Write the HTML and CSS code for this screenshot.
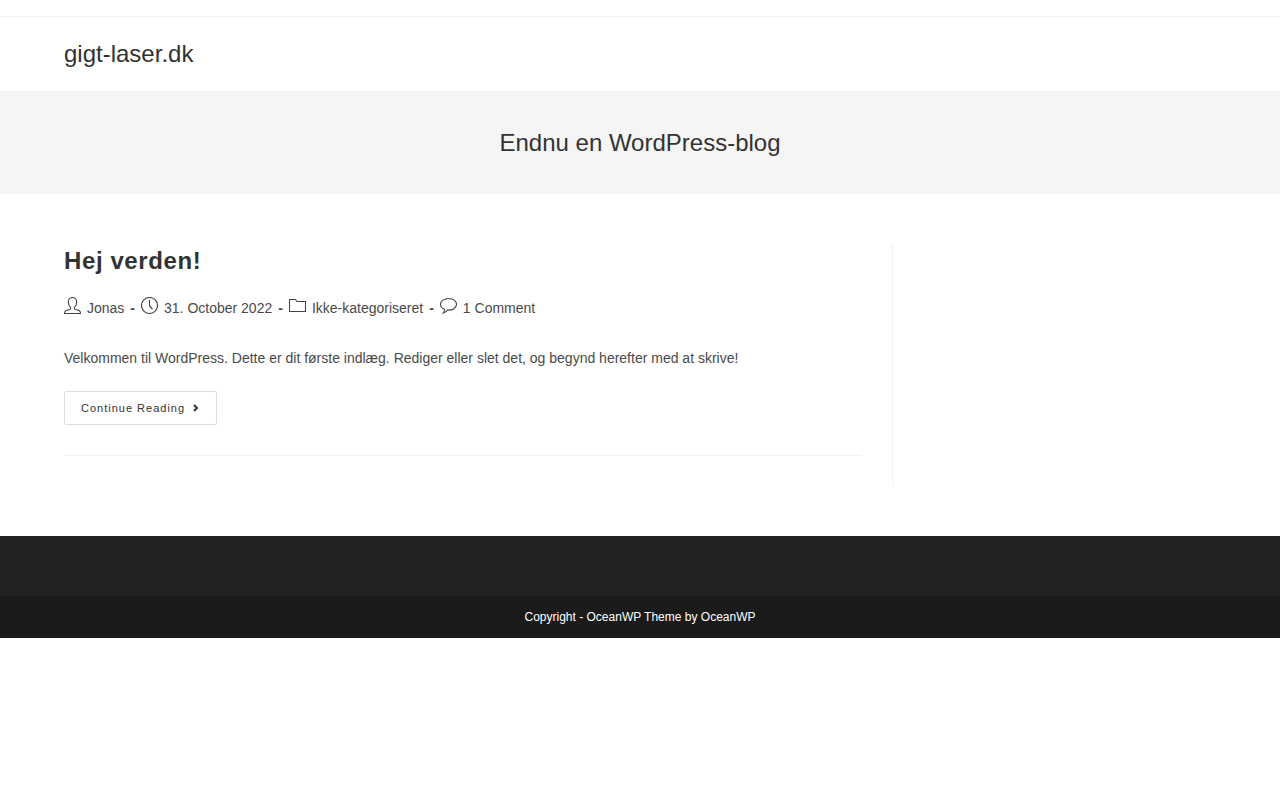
FILE: index.html
```html
<!DOCTYPE html>
<html lang="da">
<head>
<meta charset="utf-8">
<meta name="viewport" content="width=device-width, initial-scale=1">
<title>gigt-laser.dk</title>
<link rel="stylesheet" href="styles.css">
</head>
<body>
<div class="top-bar"></div>
<header class="site-header">
  <div class="container"><a class="site-title" href="#">gigt-laser.dk</a></div>
</header>
<section class="page-header">
  <h1 class="page-title">Endnu en WordPress-blog</h1>
</section>
<main class="container content-wrap">
  <div class="primary">
    <article class="entry">
      <h2 class="entry-title"><a href="#">Hej verden!</a></h2>
      <ul class="meta">
        <li><svg class="icon" viewBox="0 0 17 17" aria-hidden="true"><path d="M6.5 10.3V11.5C6.5 12.3 5.8 12.6 4.8 12.8L2 13.5C1 13.9.5 14.7.5 16.5H16.5C16.5 14.7 16 13.9 15 13.5L12.2 12.8C11.2 12.6 10.5 12.3 10.5 11.5V10.3C11.8 9.3 12.7 7.6 12.7 5.2C12.7 2 11 .5 8.5 .5S4.3 2 4.3 5.2C4.3 7.6 5.2 9.3 6.5 10.3"/></svg><a href="#">Jonas</a></li>
        <li><svg class="icon" viewBox="0 0 17 17" aria-hidden="true"><circle cx="8.5" cy="8.5" r="8"/><path d="M8.5 3V9L11.5 12"/></svg><span>31. October 2022</span></li>
        <li><svg class="icon" viewBox="0 0 17 17" aria-hidden="true"><path d="M.5 14.5V2.5H6.5L8 4.5H16.5V14.5Z"/></svg><a href="#">Ikke-kategoriseret</a></li>
        <li><svg class="icon" viewBox="0 0 17 17" aria-hidden="true"><path d="M8.5 1.5C4 1.5.5 4 .5 7.3C.5 9.5 2 11.3 4.4 12.3C4.6 13.8 4.2 15 3.2 16C5.2 15.8 6.5 14.9 7.4 13.1C12.7 13.6 16.5 10.9 16.5 7.3C16.5 4 13 1.5 8.5 1.5Z"/></svg><a href="#">1 Comment</a></li>
      </ul>
      <p class="summary">Velkommen til WordPress. Dette er dit første indlæg. Rediger eller slet det, og begynd herefter med at skrive!</p>
      <a class="read-more" href="#">Continue Reading<svg class="chevron" viewBox="0 0 6 8" aria-hidden="true"><path d="M1 1L4 4L1 7"/></svg></a>
    </article>
  </div>
  <aside class="sidebar"></aside>
</main>
<footer>
  <div class="footer-widgets"></div>
  <div class="footer-bottom">Copyright - OceanWP Theme by OceanWP</div>
</footer>
</body>
</html>
```
FILE: styles.css
```css
* {
  box-sizing: border-box;
}

body {
  margin: 0;
  background: #fff;
  color: #4a4a4a;
  font-family: "Liberation Sans", Arial, sans-serif;
  font-size: 14px;
  line-height: 26px;
}

a {
  color: inherit;
  text-decoration: none;
}

.container {
  width: 90%;
  max-width: 1200px;
  margin: 0 auto;
}

.top-bar {
  padding-top: 16px;
  border-bottom: 1px solid #f1f1f1;
}

.site-header {
  padding: 24px 0;
  border-bottom: 1px solid #f1f1f1;
}

.site-header .container {
  display: flex;
}

.site-title {
  color: #333;
  font-size: 24px;
}

.page-header {
  padding: 34px 0;
  background: #f5f5f5;
  text-align: center;
}

.page-title {
  margin: 0;
  color: #333;
  font-size: 24px;
  font-weight: 400;
  line-height: 34px;
}

.content-wrap {
  display: flex;
  padding: 50px 0;
}

.primary {
  width: 72%;
  padding: 0 30px 30px 0;
  border-right: 1px solid #f1f1f1;
}

.sidebar {
  flex: 1;
}

.entry {
  padding-bottom: 30px;
  border-bottom: 1px solid #f1f1f1;
}

.entry-title {
  margin: 0 0 16px;
  color: #333;
  font-size: 24px;
  line-height: 34px;
  letter-spacing: 0.025em;
}

.meta {
  display: flex;
  flex-wrap: wrap;
  margin: 0 0 23px;
  padding: 0;
  list-style: none;
  line-height: 28px;
}

.meta li {
  display: flex;
}

.meta li + li::before {
  content: "-";
  margin: 0 6px;
  font-weight: 700;
}

.icon {
  width: 17px;
  height: 17px;
  margin: 3px 6px 0 0;
  fill: none;
  stroke: #444;
  stroke-width: 1.1;
}

.summary {
  margin: 0 0 20px;
}

.read-more {
  display: inline-flex;
  align-items: center;
  padding: 0 17px 0 16px;
  border: 1px solid #ddd;
  border-radius: 2px;
  color: #333;
  font-size: 11px;
  line-height: 32px;
  letter-spacing: 1px;
  vertical-align: top;
}

.chevron {
  width: 6px;
  height: 8px;
  margin-left: 8px;
  fill: none;
  stroke: #333;
  stroke-width: 2;
}

.footer-widgets {
  padding-top: 60px;
  background: #222;
}

.footer-bottom {
  padding: 10px 0;
  background: #1b1b1b;
  color: #fff;
  font-size: 12px;
  line-height: 22px;
  text-align: center;
}
```
